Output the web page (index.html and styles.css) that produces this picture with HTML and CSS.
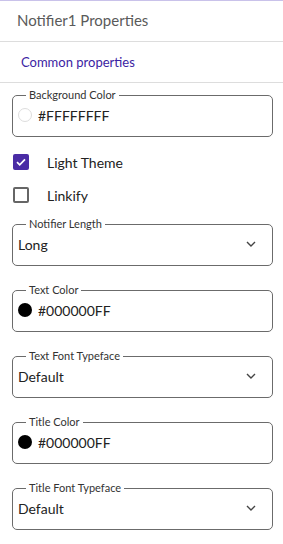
FILE: index.html
```html
<!DOCTYPE html>
<html lang="en">
<head>
    <meta charset="UTF-8">
    <meta name="viewport" content="width=device-width, initial-scale=1.0">
    <title>Notifier1 Properties</title>
    <link rel="stylesheet" href="styles.css">
</head>
<body>

<div class="panel">
    <div class="panel-title">Notifier1 Properties</div>
    <div class="section-title">Common properties</div>

    <div class="fields">
        <fieldset class="field">
            <legend>Background Color</legend>
            <div class="field-value">
                <span class="swatch swatch-white"></span>
                <span>#FFFFFFFF</span>
            </div>
        </fieldset>

        <div class="checks">
            <label class="check">
                <span class="box checked">
                    <svg width="10" height="8" viewBox="0 0 10 8"><path d="M1 4.2 L3.7 6.8 L9 1.3" fill="none" stroke="#fff" stroke-width="1.7"/></svg>
                </span>
                Light Theme
            </label>
            <label class="check">
                <span class="box"></span>
                Linkify
            </label>
        </div>

        <fieldset class="field">
            <legend>Notifier Length</legend>
            <div class="field-value select">
                <span>Long</span>
                <svg class="chevron" width="10" height="6" viewBox="0 0 10 6"><path d="M1 1 L5 5 L9 1" fill="none" stroke="#444" stroke-width="1.4"/></svg>
            </div>
        </fieldset>

        <fieldset class="field">
            <legend>Text Color</legend>
            <div class="field-value">
                <span class="swatch swatch-black"></span>
                <span>#000000FF</span>
            </div>
        </fieldset>

        <fieldset class="field">
            <legend>Text Font Typeface</legend>
            <div class="field-value select">
                <span>Default</span>
                <svg class="chevron" width="10" height="6" viewBox="0 0 10 6"><path d="M1 1 L5 5 L9 1" fill="none" stroke="#444" stroke-width="1.4"/></svg>
            </div>
        </fieldset>

        <fieldset class="field">
            <legend>Title Color</legend>
            <div class="field-value">
                <span class="swatch swatch-black"></span>
                <span>#000000FF</span>
            </div>
        </fieldset>

        <fieldset class="field">
            <legend>Title Font Typeface</legend>
            <div class="field-value select">
                <span>Default</span>
                <svg class="chevron" width="10" height="6" viewBox="0 0 10 6"><path d="M1 1 L5 5 L9 1" fill="none" stroke="#444" stroke-width="1.4"/></svg>
            </div>
        </fieldset>
    </div>
</div>

</body>
</html>
```

FILE: styles.css
```css
body {
    font-family: Lato, "Noto Sans", sans-serif;
    margin: 0;
    padding: 0;
    background-color: #fff;
    color: #222;
}

.panel {
    width: 283px;
    border-top: 1px solid #c9c2ea;
}

.panel-title {
    height: 40px;
    line-height: 38px;
    padding-left: 17px;
    font-size: 15px;
    color: #5a5a5a;
    border-bottom: 1px solid #ddd;
}

.section-title {
    height: 40px;
    line-height: 40px;
    padding-left: 21px;
    font-size: 13px;
    color: #3b23a3;
    border-bottom: 1px solid #ddd;
}

.fields {
    padding: 6px 10px 0 12px;
}

.field {
    margin: 0 0 18px 0;
    padding: 0 5px 0 5px;
    height: 48px;
    box-sizing: border-box;
    border: 1px solid #6b6b6b;
    border-radius: 5px;
    min-width: 0;
}

.field legend {
    font-size: 11px;
    color: #333;
    padding: 0 3px;
    margin-left: 8px;
    line-height: 12px;
}

.field-value {
    display: flex;
    align-items: center;
    height: 28px;
    font-size: 14px;
    color: #222;
}

.select {
    justify-content: space-between;
}

.chevron {
    margin-right: 11px;
}

.swatch {
    width: 14px;
    height: 14px;
    border-radius: 50%;
    margin-right: 6px;
    box-sizing: border-box;
}

.swatch-white {
    border: 1px solid #ddd;
    background-color: #fff;
}

.swatch-black {
    background-color: #000;
}

.checks {
    display: flex;
    flex-direction: column;
    gap: 15px;
    margin: -2px 0 14px 1px;
}

.check {
    display: flex;
    align-items: center;
    height: 18px;
    font-size: 14px;
    color: #222;
}

.box {
    width: 16px;
    height: 16px;
    box-sizing: border-box;
    border: 2px solid #666;
    border-radius: 2px;
    margin-right: 18px;
    display: flex;
    align-items: center;
    justify-content: center;
}

.box.checked {
    border: none;
    background-color: #4a2ca5;
}
```
